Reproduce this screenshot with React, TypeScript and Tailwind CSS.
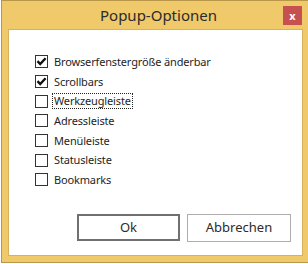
const options = [
  { label: "Browserfenstergröße änderbar", checked: true },
  { label: "Scrollbars", checked: true },
  { label: "Werkzeugleiste", checked: false, focused: true },
  { label: "Adressleiste", checked: false },
  { label: "Menüleiste", checked: false },
  { label: "Statusleiste", checked: false },
  { label: "Bookmarks", checked: false },
];

function CheckBox({ checked }: { checked: boolean }) {
  return (
    <span className="flex h-[13px] w-[13px] shrink-0 items-center justify-center border border-[#333333] bg-white">
      {checked && (
        <svg width="11" height="11" viewBox="0 0 11 11">
          <path
            d="M1.5 5.2 L4.2 8 L9.6 2.2"
            fill="none"
            stroke="#111"
            strokeWidth="2.4"
          />
        </svg>
      )}
    </span>
  );
}

export default function App() {
  return (
    <div
      className="h-[264px] w-[308px] overflow-hidden bg-white"
      style={{ fontFamily: '"Noto Sans", "Open Sans", sans-serif' }}
    >
      <div className="ml-px flex h-[263px] w-[320px] flex-col border-y border-l border-[#b8974a] bg-[#f0c96b] pl-[6px] pr-[6px]">
        {/* Title bar */}
        <div className="relative flex h-[28px] w-[301px] shrink-0 items-center justify-center">
          <span className="text-[15px] leading-none text-[#2b2b2b]">
            Popup-Optionen
          </span>
          <div className="absolute right-[7px] top-[5px] flex h-[19px] w-[19px] items-center justify-center bg-[#c75050] text-[11px] font-bold leading-none text-white">
            x
          </div>
        </div>

        {/* Client area */}
        <div className="flex h-[227px] w-[295px] flex-col border border-[#d7b25e] bg-white">
          <div className="flex flex-col pl-[26px] pt-[22px]">
            {options.map((o) => (
              <div key={o.label} className="flex h-[19.7px] items-center gap-[4px]">
                <CheckBox checked={o.checked} />
                <span
                  className={
                    o.focused
                      ? "border border-dotted border-[#222] px-px text-[11px] leading-[14px] tracking-[-0.15px] text-[#1e1e1e]"
                      : "border border-transparent px-px text-[11px] leading-[14px] tracking-[-0.15px] text-[#1e1e1e]"
                  }
                >
                  {o.label}
                </span>
              </div>
            ))}
          </div>

          <div className="mt-auto mb-[13px] flex justify-end gap-[7px] pr-[11px]">
            <button className="h-[27px] w-[103px] border-2 border-[#707070] bg-white text-[13px] text-[#2b2b2b]">
              Ok
            </button>
            <button className="h-[28px] w-[104px] border border-[#adadad] bg-white text-[13px] text-[#2b2b2b]">
              Abbrechen
            </button>
          </div>
        </div>
      </div>
    </div>
  );
}
